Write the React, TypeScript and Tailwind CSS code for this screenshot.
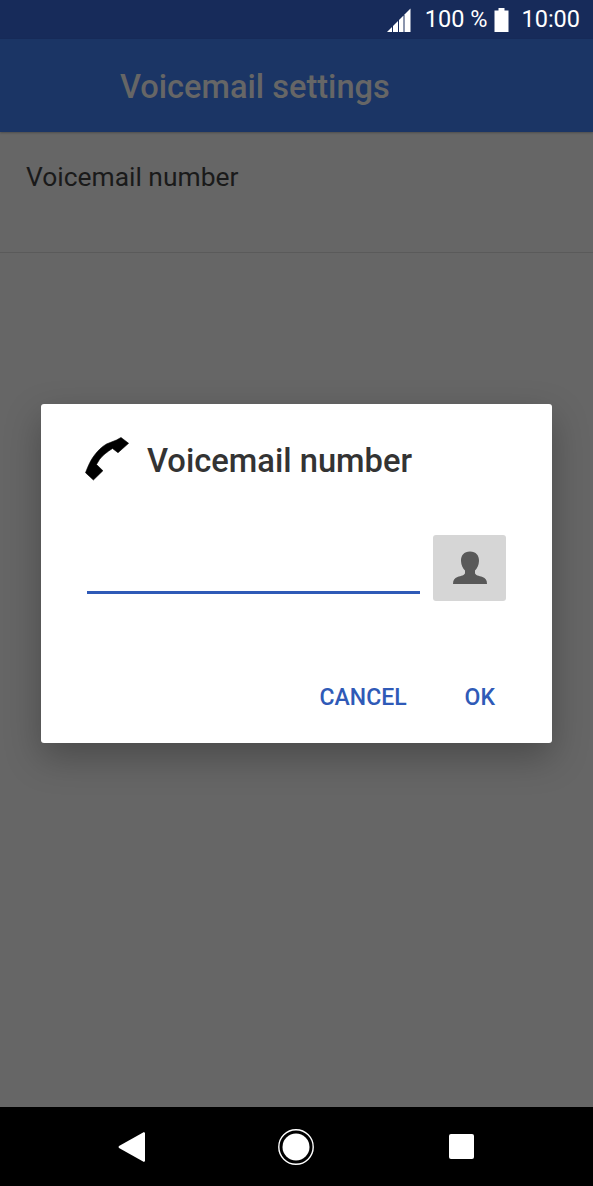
const SignalIcon = () => (
  <svg width="24" height="24" viewBox="0 0 24 24" fill="#fff">
    <path d="M0 24 5 19V24Z" />
    <path d="M6 18 11 13V24H6Z" />
    <path d="M12 12 16.5 7.5V24H12Z" />
    <path d="M17.5 6.5 23.5 0.5V24H17.5Z" />
  </svg>
);

const BatteryIcon = () => (
  <svg width="15" height="24" viewBox="0 0 15 24" fill="#fff">
    <path d="M4.5 0H10.5V2.5H14.5V24H0.5V2.5H4.5Z" />
  </svg>
);

const PhoneIcon = () => (
  <svg className="-mt-[4px]" width="45" height="44" viewBox="0 0 45 44" fill="#000" stroke="#000" strokeWidth="0.6" strokeLinejoin="round">
    <path d="M36 0.5 43.6 6.3 33 15.7 27.5 11.5C22.5 14.5 17 19 14.5 22.5L11.5 27.5 17.9 33.7 8.4 43 0.5 35.7 2.7 30.3C4.5 26 6.5 22 9.6 18 13 13.5 17 9.5 21.5 7L31.5 3Z" />
  </svg>
);

const ContactIcon = () => (
  <svg width="34" height="34" viewBox="0 0 34 34" fill="#595959">
    <path d="M17 0.5C23 0.5 26.2 4.5 26 10C25.8 14 24.2 17.5 22 19.5V22C22 24 26 25 29.5 26C32.5 27 34 29 34 33H0C0 29 1.5 27 4.5 26C8 25 12 24 12 22V19.5C9.8 17.5 8.2 14 8 10C7.8 4.5 11 0.5 17 0.5Z" />
  </svg>
);

export default function App() {
  return (
    <div className="relative flex h-[1186px] w-[593px] flex-col overflow-hidden bg-[#666666] font-['Roboto',sans-serif]">
      <div className="flex h-[39px] items-center justify-end bg-[#172b5a] pr-[13px] text-[23.5px] leading-none text-white">
        <SignalIcon />
        <span className="ml-[14px]">100 %</span>
        <span className="ml-[7px]">
          <BatteryIcon />
        </span>
        <span className="ml-[12px]">10:00</span>
      </div>

      <div className="flex h-[93px] items-center bg-[#1b3565] pl-[120px] pt-[3px] shadow-[0_1px_2px_rgba(0,0,0,0.25)]">
        <h1 className="text-[32.6px] font-medium text-[#666666]">Voicemail settings</h1>
      </div>

      <div className="h-[121px] border-b border-[#5a5a5a] pl-[26px] pt-[27px]">
        <p className="text-[26.4px] leading-9 text-[#1a1a1a]">Voicemail number</p>
      </div>

      <div className="flex-1" />

      <div className="flex h-[79px] items-center bg-black pl-[118px]">
        <svg width="28" height="32" viewBox="0 0 28 32" fill="#fff">
          <path d="M26 1 27 2V30L26 31 1 17 0.5 16 1 15Z" />
        </svg>
        <svg className="ml-[132px]" width="36" height="36" viewBox="0 0 36 36">
          <circle cx="18" cy="18" r="17.2" fill="none" stroke="#fff" strokeWidth="1.4" />
          <circle cx="18" cy="18" r="13.5" fill="#fff" />
        </svg>
        <div className="ml-[135px] h-[25px] w-[25px] rounded-[2px] bg-white" />
      </div>

      <div className="absolute inset-x-0 top-[404px] px-[41px]">
        <div className="h-[339px] w-[511px] rounded-[3px] bg-white pl-[44px] pr-[46px] shadow-[0_14px_36px_rgba(0,0,0,0.28)]">
          <div className="flex items-center pt-[34px]">
            <PhoneIcon />
            <h2 className="ml-[17px] text-[32.7px] font-medium leading-[46px] text-[#333333]">Voicemail number</h2>
          </div>
          <div className="mt-[51px] ml-[2px] flex items-end gap-[13px]">
            <div className="h-[47px] w-[333px] border-b-[3px] border-[#2f5ab7]" />
            <div className="mb-[-7px] flex h-[66px] w-[73px] items-center justify-center rounded-[3px] bg-[#d6d6d6]">
              <ContactIcon />
            </div>
          </div>
          <div className="mt-[92px] flex justify-end gap-[58px] pr-[11px] text-[23px] font-medium leading-none text-[#2f5ab7]">
            <span>CANCEL</span>
            <span>OK</span>
          </div>
        </div>
      </div>
    </div>
  );
}
